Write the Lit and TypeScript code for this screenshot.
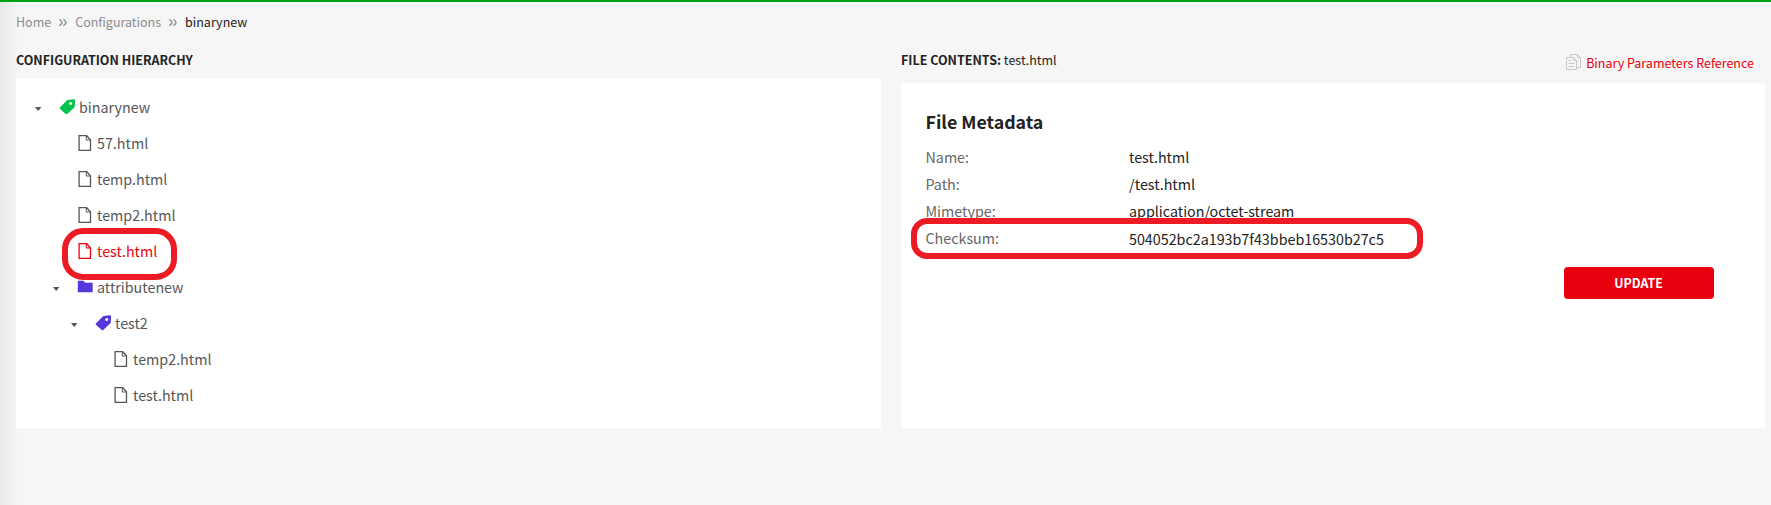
import { LitElement, html, css, svg } from "lit";
import { customElement } from "lit/decorators.js";
import { classMap } from "lit/directives/class-map.js";

type Kind = "tag" | "folder" | "file";

interface TreeNode {
  label: string;
  kind: Kind;
  depth: number;
  tone?: "green" | "violet";
  selected?: boolean;
}

const nodes: TreeNode[] = [
  { label: "binarynew", kind: "tag", depth: 0, tone: "green" },
  { label: "57.html", kind: "file", depth: 1 },
  { label: "temp.html", kind: "file", depth: 1 },
  { label: "temp2.html", kind: "file", depth: 1 },
  { label: "test.html", kind: "file", depth: 1, selected: true },
  { label: "attributenew", kind: "folder", depth: 1, tone: "violet" },
  { label: "test2", kind: "tag", depth: 2, tone: "violet" },
  { label: "temp2.html", kind: "file", depth: 3 },
  { label: "test.html", kind: "file", depth: 3 },
];

const metadata = [
  { name: "Name:", value: "test.html" },
  { name: "Path:", value: "/test.html" },
  { name: "Mimetype:", value: "application/octet-stream" },
  { name: "Checksum:", value: "504052bc2a193b7f43bbeb16530b27c5", marked: true },
];

const shapes = {
  tag: svg`<path fill="currentColor" fill-rule="evenodd" d="M7.900 .9 13.600 .2Q15.200 0 15.100 1.500L14.800 7.200Q14.700 8 14.200 8.500L7.200 15Q6.500 15.600 5.800 15L-.1 9.700Q-.7 9.100-.1 8.400L6.800 1.500Q7.300 1 7.900 .9ZM10.700 3.100a1.450 1.450 0 1 0 .01 0Z"/>`,
  folder: svg`<path fill="currentColor" d="M.4 1.700H5.300L7.200 3.700H14.100Q14.700 3.700 14.700 4.300V12.700Q14.700 13.300 14.100 13.300H.4Q-.2 13.300-.2 12.700V2.300Q-.2 1.700 .4 1.700Z"/>`,
  file: svg`<path fill="none" stroke="currentColor" stroke-width="1.300" d="M1.100 .7H8.700L12.500 4.700V15.300H1.100Z"/><path fill="none" stroke="currentColor" d="M8.300 1V5H12.300"/>`,
};

@customElement("tree-row")
export class TreeRow extends LitElement {
  static properties = { node: { attribute: false } };
  declare node: TreeNode;

  static styles = css`
    :host { display: block; }
    .row { display: flex; align-items: center; height: 36px; color: #565656; }
    .indent { flex: none; }
    .toggle { display: flex; width: 7px; height: 4px; margin: 2px 18px 0 0; flex: none; }
    .icon { width: 16px; height: 16px; flex: none; overflow: visible; margin-top: -2px; }
    .green { color: #00c34e; }
    .violet { color: #5637dc; }
    .label { margin: -2px 0 0 3px; font-size: 14.3px; line-height: 20px; white-space: nowrap; }
    .selected { color: #e9000f; }
  `;

  render() {
    const { label, kind, depth, tone, selected } = this.node;
    return html`<div class=${classMap({ row: true, selected: !!selected })}>
      <span class="indent" style="width:${depth * 18}px"></span>
      <span class="toggle">${kind === "file" ? "" : html`<svg width="7" height="4" viewBox="0 0 7 4"><path fill="#565656" d="M0 0H6.400L3.700 3.600Q3.200 4.100 2.700 3.600Z"/></svg>`}</span>
      <svg class=${classMap({ icon: true, green: tone === "green", violet: tone === "violet" })} viewBox="0 0 16 16">${shapes[kind]}</svg>
      <span class="label">${label}</span>
    </div>`;
  }
}

@customElement("app-root")
export class AppRoot extends LitElement {
  static styles = css`
    :host { display: block; font-family: "Noto Sans CJK SC", sans-serif; }
    * { box-sizing: border-box; }
    .page {
      height: 505px; border-top: 2px solid #00a410; color: #222; overflow: hidden;
      background: linear-gradient(90deg, #e9e9e9, #f2f2f2 14px, #f6f6f6 18px);
      padding: 0 6px 0 16px; font-size: 12.5px; line-height: 18px; white-space: nowrap;
    }
    .crumbs { display: flex; padding-top: 11px; height: 42px; color: #8b8b8b; }
    .sep { width: 24px; display: flex; justify-content: center; padding-right: 1px; }
    .sep svg { width: 8px; height: 18px; }
    .here { color: #222; }
    .columns { display: grid; grid-template-columns: 865px 864px; gap: 20px; }
    .column { display: flex; flex-direction: column; height: 384px; }
    .head { display: flex; justify-content: space-between; height: 34px; padding-top: 7px; flex: none; }
    .right .head { height: 39px; }
    .title { font-weight: 700; }
    .plain { font-weight: 400; }
    .panel { background: #fff; flex: 1; }
    .tree { padding: 12px 0 0 19px; position: relative; }
    .ref { display: flex; gap: 5px; color: #e9000f; padding: 3px 11px 0 0; }
    .ref svg { width: 15px; height: 16px; }
    .details { padding: 26px 25px 0 24.5px; }
    h2 { margin: 0 0 10px; font-size: 17.8px; line-height: 24px; font-weight: 700; }
    .pair { display: grid; grid-template-columns: 203.5px 1fr; height: 27px; line-height: 27px; font-size: 14.3px; position: relative; }
    .name { color: #666; }
    .marked .value { padding-top: 1px; }
    .mark { position: absolute; border: 6px solid #ed1c24; }
    .mark-file { left: 46px; top: 150px; width: 115px; height: 52px; border-radius: 21px; }
    .mark-sum { left: -14.5px; top: -6px; width: 512px; height: 41px; border-radius: 16px; }
    .actions { display: flex; justify-content: flex-end; padding: 16px 26px 0 0; }
    button {
      width: 150px; height: 32px; border: 0; border-radius: 4px; padding: 0 1px 0 0; background: #e9000f; color: #fff;
      font: 700 12.4px/32px "Noto Sans CJK SC", sans-serif;
    }
  `;

  private separator() {
    return html`<span class="sep"><svg viewBox="0 0 8 18"><path fill="none" stroke="#8b8b8b" stroke-width="1.300" d="M.4 6.200Q2.400 7.700 3.100 9.500 2.400 11.300 .4 12.800M4.400 6.200Q6.400 7.700 7.100 9.500 6.400 11.300 4.400 12.800"/></svg></span>`;
  }

  render() {
    return html`<div class="page">
      <nav class="crumbs">
        <span>Home</span>${this.separator()}<span>Configurations</span>${this.separator()}<span class="here">binarynew</span>
      </nav>
      <div class="columns">
        <section class="column">
          <div class="head"><span class="title">CONFIGURATION HIERARCHY</span></div>
          <div class="panel tree">
            ${nodes.map((n) => html`<tree-row .node=${n}></tree-row>`)}
            <div class="mark mark-file"></div>
          </div>
        </section>
        <section class="column right">
          <div class="head">
            <span class="title">FILE CONTENTS: <span class="plain">test.html</span></span>
            <a class="ref">
              <svg viewBox="0 0 15 16" fill="none" stroke="#c9c9c9"><path d="M4.500 3V.5H11.500L14.500 3.500V13.500H11M.5 3.500H7.500L10.500 6.500V15.500H.5ZM7.500 3.500V6.500H10.500M11.500 .5V3.500H14.500M2.500 6.500H5M2.500 9.500H8.500M2.500 12.500H8.500"/></svg>
              <span>Binary Parameters Reference</span>
            </a>
          </div>
          <div class="panel details">
            <h2>File Metadata</h2>
            ${metadata.map((m) => html`<div class=${classMap({ pair: true, marked: !!m.marked })}>
              <span class="name">${m.name}</span><span class="value">${m.value}</span>
              ${m.marked ? html`<div class="mark mark-sum"></div>` : ""}
            </div>`)}
            <div class="actions"><button>UPDATE</button></div>
          </div>
        </section>
      </div>
    </div>`;
  }
}
